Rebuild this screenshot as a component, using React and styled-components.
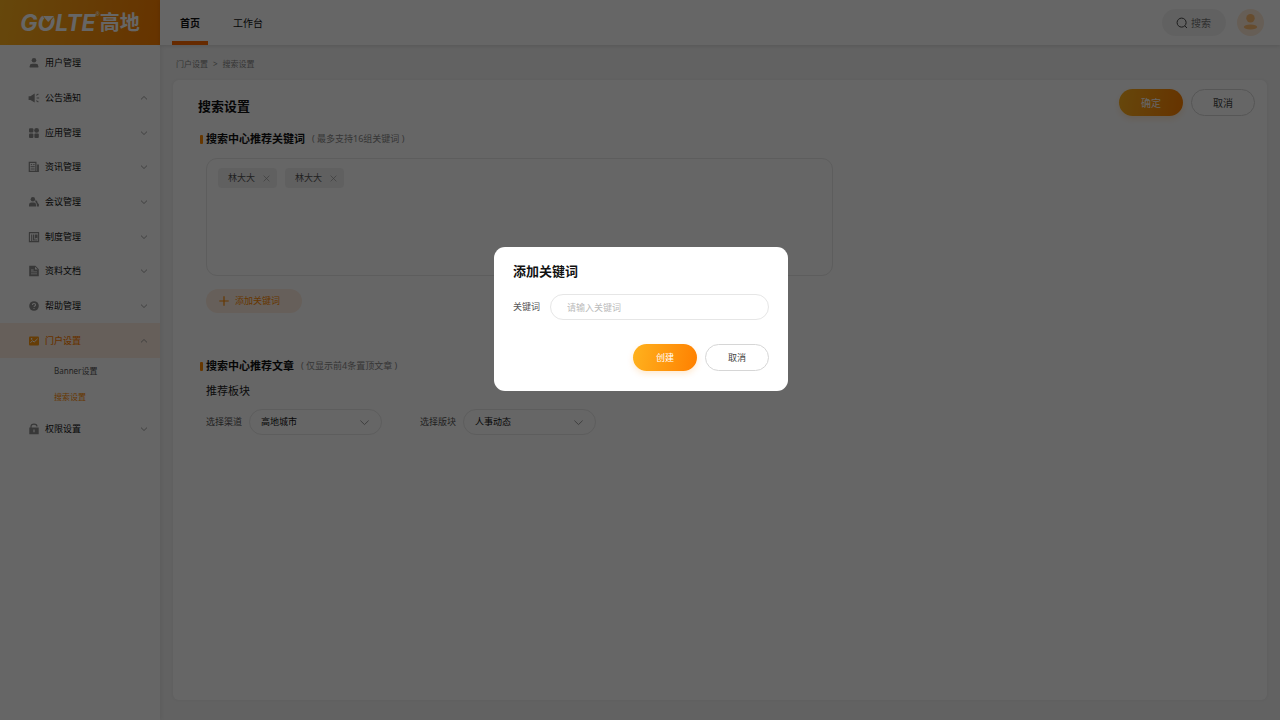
import React, { useId } from "react";
import styled, { createGlobalStyle, css } from "styled-components";

const GlobalStyle = createGlobalStyle`
  *, *::before, *::after { box-sizing: border-box; }
  body {
    margin: 0;
    background: #f5f5f5;
    color: #222;
    font-family: "Noto Sans", "Noto Sans CJK SC", sans-serif;
    font-size: 9px;
    line-height: 16px;
  }
  button, input, select { font: inherit; color: inherit; margin: 0; }
  button { cursor: pointer; }
  h1, h2, h3, ul, ol, p { margin: 0; padding: 0; font-weight: inherit; font-size: inherit; }
  ul, ol { list-style: none; }
`;

/* ---------- shell ---------- */

const Shell = styled.div`
  display: grid;
  grid-template-columns: 160px minmax(0, 1fr);
  min-height: 100vh;
`;

const Sidebar = styled.aside`
  background: #fff;
  box-shadow: 0 0 6px rgba(0, 0, 0, 0.1);
`;

const Brand = styled.a`
  display: flex;
  align-items: center;
  justify-content: center;
  height: 45px;
  background: linear-gradient(100deg, #ffb21e, #ff8000);
  color: #fff;
  text-decoration: none;
  line-height: 20px;
`;

const BrandLatin = styled.span`
  position: relative;
  font-family: Inter, sans-serif;
  font-size: 23px;
  font-weight: 700;
  font-style: italic;
`;

const BrandNotch = styled.svg`
  position: absolute;
  left: 21px;
  top: 1px;
  width: 15px;
  height: 10px;
`;

const BrandMark = styled.sup`
  align-self: flex-start;
  margin-top: 8px;
  font-size: 5px;
  line-height: 12px;
`;

const BrandHan = styled.span`
  font-size: 20px;
  font-weight: 700;
`;

const NavRows = styled.ul`
  display: grid;
  grid-auto-rows: 1fr;
  min-height: 312px;
  margin-top: 1px;
`;

const NavTail = styled.ul`
  display: grid;
  grid-auto-rows: 38px;
`;

const NavButton = styled.button`
  display: flex;
  align-items: center;
  gap: 5px;
  width: 100%;
  height: 100%;
  padding: 0 12px 0 28px;
  border: 0;
  text-align: left;
  font-weight: ${(p) => (p.$active ? 500 : 400)};
  background: ${(p) => (p.$active ? "#ffeee2" : "transparent")};
  color: ${(p) => (p.$active ? "#ff8000" : "#111")};
`;

const NavIcon = styled.svg`
  flex: none;
  width: 12px;
  height: 12px;
  color: ${(p) => (p.$active ? "#ff9a10" : "#8c8c8c")};
`;

const NavLabel = styled.span`
  flex: 1;
`;

const Chevron = styled.svg`
  flex: none;
  width: ${(p) => p.$size}px;
  height: ${(p) => p.$size}px;
  color: #888;
  transform: ${(p) => (p.$up ? "rotate(180deg)" : "none")};
`;

const SubNav = styled.ul`
  display: grid;
  grid-auto-rows: 26px;
`;

const SubLink = styled.a`
  display: block;
  padding-left: 54px;
  font-size: 8px;
  line-height: 26px;
  text-decoration: none;
  color: ${(p) => (p.$active ? "#ff8a00" : "#555")};
`;

/* ---------- top bar ---------- */

const Main = styled.div`
  display: flex;
  flex-direction: column;
  min-width: 0;
`;

const TopBar = styled.header`
  display: flex;
  align-items: center;
  justify-content: space-between;
  height: 45px;
  padding: 0 16px 0 12px;
  background: #fff;
  box-shadow: 0 1px 4px rgba(0, 0, 0, 0.12);
`;

const Tabs = styled.nav`
  display: flex;
  gap: 17px;
  align-self: stretch;
`;

const Tab = styled.a`
  display: flex;
  align-items: center;
  padding: 4px 8px 0;
  border-bottom: 4px solid ${(p) => (p.$active ? "#ff6a00" : "transparent")};
  font-size: 10px;
  font-weight: ${(p) => (p.$active ? 700 : 400)};
  color: #111;
  text-decoration: none;
`;

const Tools = styled.div`
  display: flex;
  align-items: center;
  gap: 11px;
`;

const SearchBox = styled.label`
  display: flex;
  align-items: center;
  gap: 3px;
  width: 64px;
  height: 27px;
  padding: 0 12px 0 14px;
  border-radius: 14px;
  background: #f3f3f3;
  color: #444;
`;

const SearchInput = styled.input`
  flex: 1;
  min-width: 0;
  padding: 0;
  border: 0;
  outline: 0;
  background: none;
  font-size: 10px;
  &::placeholder { color: #777; opacity: 1; }
`;

const Avatar = styled.button`
  width: 27px;
  height: 27px;
  padding: 0;
  border: 0;
  border-radius: 50%;
  background: #ffead6;
  svg { display: block; }
`;

/* ---------- content ---------- */

const Crumbs = styled.ol`
  display: flex;
  gap: 5px;
  padding: 11px 16px 8px;
  font-size: 8px;
  color: #888;
`;

const CrumbLink = styled.a`
  color: inherit;
  text-decoration: none;
`;

const Card = styled.main`
  flex: 1;
  margin: 0 13px 20px;
  padding: 9px 12px 24px 25px;
  border-radius: 6px;
  background: #fff;
  box-shadow: 0 0 4px rgba(0, 0, 0, 0.06);
`;

const CardHead = styled.div`
  display: flex;
  align-items: flex-end;
  justify-content: space-between;
`;

const Heading = styled.h1`
  font-size: 13px;
  line-height: 20px;
  font-weight: 700;
  color: #111;
`;

const Actions = styled.div`
  display: flex;
  justify-content: flex-end;
  gap: 8px;
`;

const Pill = styled.button`
  width: 64px;
  height: 27px;
  padding: 0;
  border-radius: 14px;
  font-size: ${(p) => p.$font || 10}px;
  ${(p) =>
    p.$primary
      ? css`
          border: 0;
          color: #fff;
          background: linear-gradient(100deg, #ffb21e, #ff8000);
          box-shadow: 0 3px 6px rgba(255, 140, 0, 0.18);
        `
      : css`
          border: 1px solid #d6d6d6;
          color: #444;
          background: #fff;
        `}
`;

const Section = styled.section`
  margin-top: ${(p) => p.$gap}px;
  padding-left: 8px;
`;

const SectionHead = styled.div`
  display: flex;
  align-items: center;
  gap: 7px;
  margin-left: -6px;
`;

const SectionTitle = styled.h2`
  display: flex;
  align-items: center;
  gap: 3px;
  font-size: 11px;
  font-weight: 700;
  color: #111;
  &::before {
    content: "";
    width: 3px;
    height: 9px;
    border-radius: 1px;
    background: #ff8a00;
  }
`;

const Hint = styled.span`
  color: #888;
`;

const TagBox = styled.ul`
  display: flex;
  flex-wrap: wrap;
  align-content: flex-start;
  gap: 8px;
  max-width: 627px;
  min-height: 118px;
  margin-top: 11px;
  padding: 9px 11px;
  border: 1px solid #e8e8e8;
  border-radius: 11px;
`;

const Tag = styled.li`
  display: flex;
  align-items: center;
  gap: 8px;
  height: 20px;
  padding: 0 7px 0 10px;
  border-radius: 4px;
  background: #f1f1f1;
  color: #555;
`;

const TagClose = styled.button`
  padding: 0;
  border: 0;
  background: none;
  color: #999;
  svg { display: block; }
`;

const AddButton = styled.button`
  display: flex;
  align-items: center;
  gap: 6px;
  height: 24px;
  margin-top: 13px;
  padding: 0 22px 0 13px;
  border: 0;
  border-radius: 12px;
  background: #ffeee0;
  color: #ff8a00;
`;

const SubTitle = styled.h3`
  margin-top: 9px;
  font-size: 11px;
  font-weight: 400;
`;

const Fields = styled.div`
  display: flex;
  flex-wrap: wrap;
  gap: 16px 38px;
  margin-top: 10px;
`;

const Field = styled.div`
  display: flex;
  align-items: center;
  gap: 7px;
  color: #555;
`;

const SelectWrap = styled.div`
  display: grid;
  align-items: center;
  width: 133px;
  > * { grid-area: 1 / 1; }
  > svg { justify-self: end; margin-right: 12px; pointer-events: none; }
`;

const Select = styled.select`
  appearance: none;
  width: 100%;
  height: 26px;
  padding: 0 28px 0 11px;
  border: 1px solid #e8e8e8;
  border-radius: 13px;
  background: #fff;
  color: #111;
`;

/* ---------- dialog ---------- */

const Scrim = styled.div`
  position: fixed;
  inset: 0;
  display: flex;
  align-items: flex-start;
  justify-content: center;
  padding: 247px 0 24px 2px;
  background: rgba(0, 0, 0, 0.6);
`;

const Dialog = styled.form`
  width: 294px;
  padding: 14px 19px 20px;
  border-radius: 11px;
  background: #fff;
`;

const DialogField = styled.div`
  display: flex;
  align-items: center;
  gap: 10px;
  margin: 13px 0 24px;
  color: #555;
`;

const TextInput = styled.input`
  flex: 1;
  min-width: 0;
  height: 26px;
  padding: 0 16px;
  border: 1px solid #e6e6e6;
  border-radius: 13px;
  outline: 0;
  background: #fff;
  &::placeholder { color: #bbb; opacity: 1; }
`;

/* ---------- icons ---------- */

const glyphs = {
  user: (
    <g fill="currentColor">
      <circle cx="6" cy="3.3" r="2.3" />
      <path d="M1.7 10.6V9.2Q1.7 6.8 4.2 6.8H7.8Q10.3 6.8 10.3 9.2V10.6Z" />
    </g>
  ),
  notice: (
    <>
      <path fill="currentColor" d="M.6 4.2H2.4L6.7 1.4V10.6L2.4 7.9H.6Z" />
      <path stroke="currentColor" strokeWidth="1.1" d="M8.3 3.4L10.4 2M8.6 6H11.2M8.3 8.6L10.4 10" />
    </>
  ),
  apps: (
    <g fill="currentColor">
      <rect x="1" y="1.2" width="4.4" height="4.4" rx="1" />
      <circle cx="8.6" cy="3.4" r="2.4" />
      <rect x="1" y="6.6" width="4.4" height="4.4" rx="1" />
      <rect x="6.4" y="6.6" width="4.4" height="4.4" rx="1" />
    </g>
  ),
  news: (
    <>
      <path fill="none" stroke="currentColor" strokeWidth="1.2" d="M1.3 1.3H7.9V10.4H1.3Z" />
      <path fill="currentColor" d="M9.1 3.6H10.9V11H7.9V9.9H9.1Z" />
      <path stroke="currentColor" strokeWidth="1" d="M2.8 3.6H4.2M5.2 3.6H6.6M2.6 5.7H6.7M2.6 8H6.7" />
    </>
  ),
  meeting: (
    <g fill="currentColor">
      <circle cx="4.9" cy="3.2" r="2.2" />
      <path d="M1 10.6V8.8Q1 6.4 3.4 6.4H6Q8 6.4 8 8.8V10.6Z" />
      <path d="M7.5 4Q9.6 4.4 9.6 6.8L10.9 8.3V10.6H8.8V8.6Q8.6 6.6 7.3 6Z" />
    </g>
  ),
  rules: (
    <>
      <path fill="none" stroke="currentColor" strokeWidth="1.1" d="M1.4 1.7V10.6H10.6V1.7M3.7 3.4V10.5M.9 1.6H11.1" />
      <path fill="currentColor" d="M5 3.4H6.3V9.6H5ZM7 3.4H9.6V7.8L8.3 6.8L7 7.8ZM5 8.6H9.6V9.6H5Z" />
    </>
  ),
  doc: (
    <path
      fill="currentColor"
      fillRule="evenodd"
      d="M1.2 .8H7.4L10.8 4.2V11.2H1.2ZM7 1.8V4.6H9.8ZM3 4.6V5.4H5.6V4.6ZM3 6.4V7.2H9V6.4ZM3 8.4V9.2H9V8.4Z"
    />
  ),
  help: (
    <>
      <circle cx="6" cy="6" r="4.8" fill="currentColor" />
      <path fill="none" stroke="#fff" strokeWidth="1.1" d="M4.4 4.9Q4.4 3.5 6 3.5T7.6 4.8Q7.6 5.5 6.8 5.9T6 7.1M6 7.9V9" />
    </>
  ),
  portal: (
    <>
      <rect x="1" y="1.6" width="10" height="8.8" rx="1" fill="currentColor" />
      <path fill="none" stroke="#fff" strokeWidth="1" d="M2.4 7.6L4.6 5.8L6.2 7L9.6 3.8" />
      <circle cx="3.6" cy="3.9" r=".8" fill="#fff" />
    </>
  ),
  lock: (
    <>
      <path fill="none" stroke="currentColor" strokeWidth="1.2" d="M3 5V3.8Q3 1.1 6 1.1T9 3.6" />
      <path
        fill="currentColor"
        fillRule="evenodd"
        d="M1.3 4.6H10.7V11.2H1.3ZM5.4 6.6V9.2H6.6V6.6Z"
      />
    </>
  ),
};

function ChevronIcon({ up = false, size = 8 }) {
  return (
    <Chevron $up={up} $size={size} viewBox="0 0 8 8" aria-hidden="true">
      <path fill="none" stroke="currentColor" strokeWidth={size > 8 ? 0.6 : 0.8} d="M1 2.6L4 5.5L7 2.6" />
    </Chevron>
  );
}

function NavItem({ icon, label, arrow, active }) {
  return (
    <li>
      <NavButton type="button" $active={active} aria-expanded={arrow ? arrow === "up" : undefined}>
        <NavIcon viewBox="0 0 12 12" $active={active} aria-hidden="true">
          {glyphs[icon]}
        </NavIcon>
        <NavLabel>{label}</NavLabel>
        {arrow && <ChevronIcon up={arrow === "up"} />}
      </NavButton>
    </li>
  );
}

function SelectField({ label, value }) {
  const id = useId();
  return (
    <Field>
      <label htmlFor={id}>{label}</label>
      <SelectWrap>
        <Select id={id} defaultValue={value}>
          <option>{value}</option>
        </Select>
        <ChevronIcon size={11} />
      </SelectWrap>
    </Field>
  );
}

function Keyword({ children }) {
  return (
    <Tag>
      {children}
      <TagClose type="button" aria-label="删除">
        <svg width="7" height="7" viewBox="0 0 7 7">
          <path stroke="currentColor" strokeWidth=".7" d="M.6 .6L6.4 6.4M6.4 .6L.6 6.4" />
        </svg>
      </TagClose>
    </Tag>
  );
}

const navItems = [
  { icon: "user", label: "用户管理" },
  { icon: "notice", label: "公告通知", arrow: "up" },
  { icon: "apps", label: "应用管理", arrow: "down" },
  { icon: "news", label: "资讯管理", arrow: "down" },
  { icon: "meeting", label: "会议管理", arrow: "down" },
  { icon: "rules", label: "制度管理", arrow: "down" },
  { icon: "doc", label: "资料文档", arrow: "down" },
  { icon: "help", label: "帮助管理", arrow: "down" },
  { icon: "portal", label: "门户设置", arrow: "up", active: true },
];

export default function App() {
  return (
    <>
      <GlobalStyle />
      <Shell>
        <Sidebar>
          <Brand href="#">
            <BrandLatin>
              GOLTE
              <BrandNotch viewBox="0 0 15 10" aria-hidden="true">
                <path fill="#ffa518" d="M0 0H15L7.5 10Z" />
                <path fill="#fff" d="M2 2H13L7.2 8Z" />
              </BrandNotch>
            </BrandLatin>
            <BrandMark>®</BrandMark>
            <BrandHan>高地</BrandHan>
          </Brand>
          <nav>
            <NavRows>
              {navItems.map((item) => (
                <NavItem key={item.icon} {...item} />
              ))}
            </NavRows>
            <SubNav>
              <li><SubLink href="#">Banner设置</SubLink></li>
              <li><SubLink href="#" $active>搜索设置</SubLink></li>
            </SubNav>
            <NavTail>
              <NavItem icon="lock" label="权限设置" arrow="down" />
            </NavTail>
          </nav>
        </Sidebar>

        <Main>
          <TopBar>
            <Tabs>
              <Tab href="#" $active>首页</Tab>
              <Tab href="#">工作台</Tab>
            </Tabs>
            <Tools>
              <SearchBox>
                <svg width="12" height="12" viewBox="0 0 12 12" fill="none" stroke="currentColor" aria-hidden="true">
                  <circle cx="5.6" cy="5.6" r="4.5" />
                  <path d="M8.8 8.9L11 11" />
                </svg>
                <SearchInput type="text" placeholder="搜索" aria-label="搜索" />
              </SearchBox>
              <Avatar type="button" aria-label="用户">
                <svg width="27" height="27" viewBox="0 0 27 27" fill="#ffbd73" aria-hidden="true">
                  <circle cx="13.5" cy="9.3" r="4.2" />
                  <ellipse cx="13.5" cy="18" rx="6.6" ry="2.6" />
                </svg>
              </Avatar>
            </Tools>
          </TopBar>

          <Crumbs>
            <li><CrumbLink href="#">门户设置</CrumbLink></li>
            <li aria-hidden="true">&gt;</li>
            <li>搜索设置</li>
          </Crumbs>

          <Card>
            <CardHead>
              <Heading>搜索设置</Heading>
              <Actions>
                <Pill type="button" $primary>确定</Pill>
                <Pill type="button">取消</Pill>
              </Actions>
            </CardHead>

            <Section $gap={15}>
              <SectionHead>
                <SectionTitle>搜索中心推荐关键词</SectionTitle>
                <Hint>( 最多支持16组关键词 )</Hint>
              </SectionHead>
              <TagBox>
                <Keyword>林大大</Keyword>
                <Keyword>林大大</Keyword>
              </TagBox>
              <AddButton type="button">
                <svg width="10" height="10" viewBox="0 0 10 10" aria-hidden="true">
                  <path stroke="currentColor" strokeWidth="1.2" d="M5 .3V9.7M.3 5H9.7" />
                </svg>
                添加关键词
              </AddButton>
            </Section>

            <Section $gap={45}>
              <SectionHead>
                <SectionTitle>搜索中心推荐文章</SectionTitle>
                <Hint>( 仅显示前4条置顶文章 )</Hint>
              </SectionHead>
              <SubTitle>推荐板块</SubTitle>
              <Fields>
                <SelectField label="选择渠道" value="高地城市" />
                <SelectField label="选择版块" value="人事动态" />
              </Fields>
            </Section>
          </Card>
        </Main>
      </Shell>

      <Scrim>
        <Dialog role="dialog" aria-modal="true" aria-labelledby="dialog-title" onSubmit={(e) => e.preventDefault()}>
          <Heading as="h2" id="dialog-title">添加关键词</Heading>
          <DialogField>
            <label htmlFor="keyword">关键词</label>
            <TextInput id="keyword" type="text" placeholder="请输入关键词" />
          </DialogField>
          <Actions>
            <Pill type="submit" $primary $font={9}>创建</Pill>
            <Pill type="button" $font={9}>取消</Pill>
          </Actions>
        </Dialog>
      </Scrim>
    </>
  );
}
